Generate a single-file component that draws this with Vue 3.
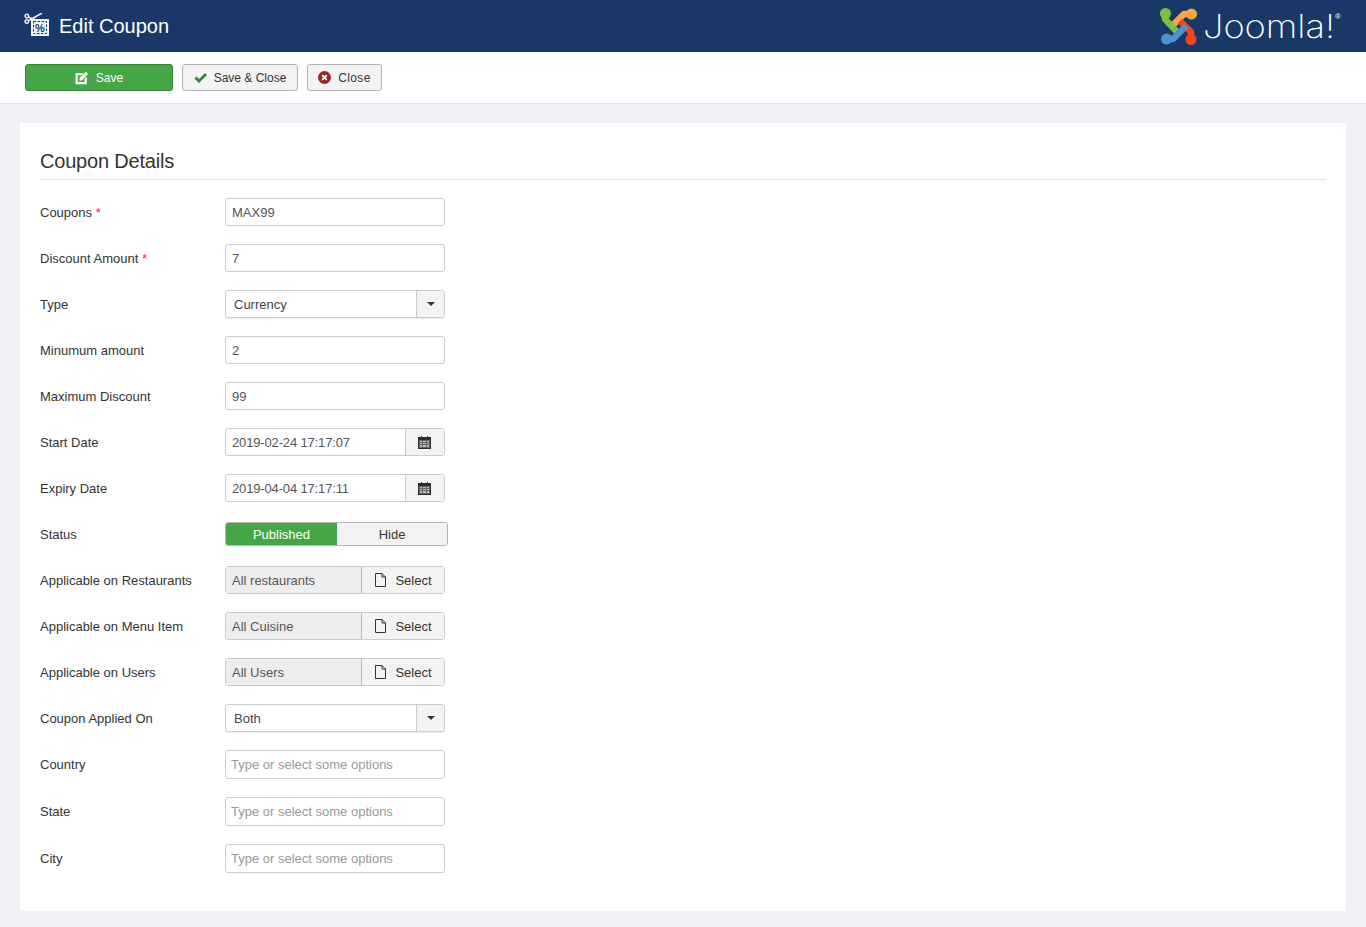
<script setup>
const rows = [
  { label: 'Coupons', required: true, kind: 'input', value: 'MAX99' },
  { label: 'Discount Amount', required: true, kind: 'input', value: '7' },
  { label: 'Type', kind: 'select', value: 'Currency' },
  { label: 'Minumum amount', kind: 'input', value: '2' },
  { label: 'Maximum Discount', kind: 'input', value: '99' },
  { label: 'Start Date', kind: 'date', value: '2019-02-24 17:17:07' },
  { label: 'Expiry Date', kind: 'date', value: '2019-04-04 17:17:11' },
  { label: 'Status', kind: 'toggle' },
  { label: 'Applicable on Restaurants', kind: 'modal', value: 'All restaurants' },
  { label: 'Applicable on Menu Item', kind: 'modal', value: 'All Cuisine' },
  { label: 'Applicable on Users', kind: 'modal', value: 'All Users' },
  { label: 'Coupon Applied On', kind: 'select', value: 'Both' },
  { label: 'Country', kind: 'chosen' },
  { label: 'State', kind: 'chosen' },
  { label: 'City', kind: 'chosen' }
]
</script>

<template>
  <div class="page">
    <header class="topbar">
      <div class="title-wrap">
        <svg class="coupon-icon" width="26" height="26" viewBox="0 0 26 26">
          <rect x="7" y="6" width="18" height="17" fill="#eef1f5" />
          <rect x="9.500" y="8.500" width="13" height="12" fill="none" stroke="#1a3867" stroke-width="1" stroke-dasharray="2.500 1.500" />
          <path d="M4 4 L12 7 M4 8 L18 0" stroke="#eef1f5" stroke-width="1.500" fill="none" />
          <circle cx="2.800" cy="3" r="1.800" fill="none" stroke="#eef1f5" stroke-width="1.400" />
          <circle cx="2.800" cy="8.500" r="1.800" fill="none" stroke="#eef1f5" stroke-width="1.400" />
          <text x="16" y="18.500" class="pct">%</text>
        </svg>
        <h1>Edit Coupon</h1>
      </div>
      <svg class="brand" width="181" height="38" viewBox="0 0 181 38">
        <g fill="none" stroke-width="6.500" stroke-linejoin="round">
          <path d="M31 7 H24 L13 18" stroke="#f9a541" />
          <path d="M5 6 V12 L18 26" stroke="#7ac143" />
          <path d="M31 33 V25 L20 14" stroke="#f44321" />
          <path d="M7 32 H13 L26 19" stroke="#5091cd" />
        </g>
        <circle cx="5.500" cy="6.500" r="5.500" fill="#7ac143" />
        <circle cx="31.500" cy="7" r="5.500" fill="#f9a541" />
        <circle cx="31" cy="32.500" r="5.500" fill="#f44321" />
        <circle cx="6.500" cy="32" r="5.500" fill="#5091cd" />
        <text class="wordmark" x="43" y="30.500" textLength="132" lengthAdjust="spacingAndGlyphs">Joomla!</text>
        <text class="reg" x="175" y="12">®</text>
      </svg>
    </header>

    <div class="toolbar">
      <button class="btn btn-save">
        <svg width="14" height="14" viewBox="0 0 14 14">
          <path d="M0.500 2h8L6.700 4.200H2.800v6.800h6.800V8l2.200-2.200v7.400H.5z" fill="#fff" />
          <path d="M4.500 7 10.800 .8l2.300 2.300L7 9.500H4.500z" fill="#fff" />
        </svg>
        <span>Save</span>
      </button>
      <button class="btn btn-wide">
        <svg width="14" height="12" viewBox="0 0 14 12">
          <path d="M0.500 6.500 2.500 4.500 5 7 11 1l2 2-8 8z" fill="#378137" />
        </svg>
        <span>Save &amp; Close</span>
      </button>
      <button class="btn btn-close">
        <svg width="13" height="13" viewBox="0 0 13 13">
          <circle cx="6.500" cy="6.500" r="6.500" fill="#942a25" />
          <path d="M4.200 4.200 8.800 8.800M8.800 4.200 4.200 8.800" stroke="#fff" stroke-width="1.800" />
        </svg>
        <span>Close</span>
      </button>
    </div>

    <main class="card">
      <h2>Coupon Details</h2>
      <div v-for="row in rows" :key="row.label" class="row" :class="{ tall: row.kind === 'chosen' }">
        <label class="label">{{ row.label }}<span v-if="row.required" class="star"> *</span></label>

        <div v-if="row.kind === 'input'" class="control field">{{ row.value }}</div>

        <div v-else-if="row.kind === 'select'" class="control select">
          <span class="select-value">{{ row.value }}</span>
          <span class="select-arrow"><i></i></span>
        </div>

        <div v-else-if="row.kind === 'date'" class="control group">
          <span class="group-value">{{ row.value }}</span>
          <span class="cal-btn">
            <svg width="13" height="13" viewBox="0 0 13 13">
              <path d="M0 1h3V0h1v1h5V0h1v1h3v12H0z" fill="#2d2d2d" />
              <rect x="1" y="4" width="11" height="8" fill="#666" />
              <path d="M2 5h2v1H2zM5 5h3v1H5zM9 5h2v1H9zM2 7h2v1H2zM5 7h3v1H5zM9 7h2v1H9zM2 9h2v2H2zM5 9h3v2H5zM9 9h2v2H9z" fill="#bbb" />
            </svg>
          </span>
        </div>

        <div v-else-if="row.kind === 'toggle'" class="toggle">
          <span class="on">Published</span>
          <span class="off">Hide</span>
        </div>

        <div v-else-if="row.kind === 'modal'" class="control group">
          <span class="modal-value">{{ row.value }}</span>
          <span class="select-btn">
            <svg width="13" height="14" viewBox="0 0 13 14">
              <path d="M1.500.5h6.500l3.500 3.500v9.500h-10z M8 .5v3.500h3.500" fill="none" stroke="#333" />
            </svg>
            Select
          </span>
        </div>

        <div v-else class="control field placeholder">Type or select some options</div>
      </div>
    </main>
  </div>
</template>

<style>
html, body { margin: 0; background: #f0f1f6; }
</style>

<style scoped>
.page {
  font-family: "Liberation Sans", Arial, sans-serif;
  font-size: 13px;
  color: #333;
  background: #f0f1f6;
  height: 927px;
  overflow: hidden;
}
.topbar {
  height: 52px;
  background: #1a3867;
  display: flex;
  align-items: center;
  justify-content: space-between;
  padding: 0 25px 0 24px;
}
.title-wrap { display: flex; align-items: center; gap: 9px; }
.coupon-icon { display: block; }
.pct { font-size: 11px; font-weight: 700; fill: #1a3867; text-anchor: middle; font-family: "Liberation Sans", sans-serif; }
h1 { margin: 0; font-size: 20px; font-weight: 400; color: #fff; line-height: 52px; }
.brand { display: block; }
.wordmark {
  font-family: Inter, "Liberation Sans", sans-serif;
  font-weight: 200;
  font-size: 32px;
  fill: #fff;
}
.reg { font-size: 8px; fill: #fff; font-family: "Liberation Sans", sans-serif; }
.toolbar {
  box-sizing: border-box;
  height: 52px;
  background: #fff;
  border-bottom: 1px solid #e1e2e8;
  padding: 12px 0 0 25px;
  display: flex;
  gap: 9px;
  align-items: flex-start;
}
.btn {
  height: 27px;
  padding: 0 10px;
  border: 1px solid #b3b3b3;
  border-radius: 3px;
  background: #f3f3f3;
  color: #333;
  font: 12px "Liberation Sans", Arial, sans-serif;
  display: flex;
  align-items: center;
  justify-content: center;
  gap: 6px;
}
.btn-wide { width: 116px; }
.btn-close { width: 75px; gap: 7px; letter-spacing: 0.35px; }
.btn-save {
  width: 148px;
  background: #46a546;
  border-color: #378137;
  color: #fff;
  gap: 7px;
}
.card {
  margin: 19px 20px 0;
  background: #fff;
  padding: 20px;
  height: 748px;
}
h2 {
  margin: 0 0 18px;
  font-size: 20px;
  font-weight: 400;
  line-height: 36px;
  letter-spacing: -0.2px;
  border-bottom: 1px solid #e1e1e1;
  height: 36px;
}
.row {
  display: flex;
  align-items: center;
  height: 28px;
  margin-bottom: 18px;
}
.row.tall { height: 29px; }
.label { width: 185px; flex: none; }
.star { color: #f22; }
.control {
  width: 220px;
  height: 100%;
  box-sizing: border-box;
  border: 1px solid #ccc;
  border-radius: 3px;
  background: #fff;
  overflow: hidden;
}
.field { padding: 0 6px; display: flex; align-items: center; color: #555; }
.placeholder { padding: 0 5px; color: #999; }
.select { display: flex; color: #444; border-color: #ccc; box-shadow: 0 1px 1px rgba(0,0,0,.08); }
.select-value { flex: 1; padding: 0 8px; display: flex; align-items: center; }
.select-arrow {
  width: 27px;
  background: #f3f3f3;
  border-left: 1px solid #ccc;
  display: flex;
  align-items: center;
  justify-content: center;
}
.select-arrow i {
  border: 4px solid transparent;
  border-top-color: #333;
  border-bottom-width: 0;
}
.group { display: flex; }
.group-value { flex: 1; padding: 0 6px; display: flex; align-items: center; color: #555; letter-spacing: -0.15px; }
.cal-btn {
  width: 37px;
  padding-right: 1px;
  background: #f3f3f3;
  border-left: 1px solid #ccc;
  display: flex;
  align-items: center;
  justify-content: center;
}
.toggle {
  width: 223px;
  height: 24px;
  box-sizing: border-box;
  display: flex;
  border: 1px solid #b3b3b3;
  border-radius: 3px;
  overflow: hidden;
}
.toggle span { display: flex; align-items: center; justify-content: center; }
.on { width: 111px; background: #46a546; color: #fff; }
.off { flex: 1; background: #f3f3f3; }
.modal-value {
  flex: 1;
  padding: 0 6px;
  display: flex;
  align-items: center;
  background: #eee;
  color: #555;
}
.select-btn {
  width: 82px;
  flex: none;
  background: #f3f3f3;
  border-left: 1px solid #bbb;
  display: flex;
  align-items: center;
  justify-content: center;
  gap: 8px;
}
</style>
